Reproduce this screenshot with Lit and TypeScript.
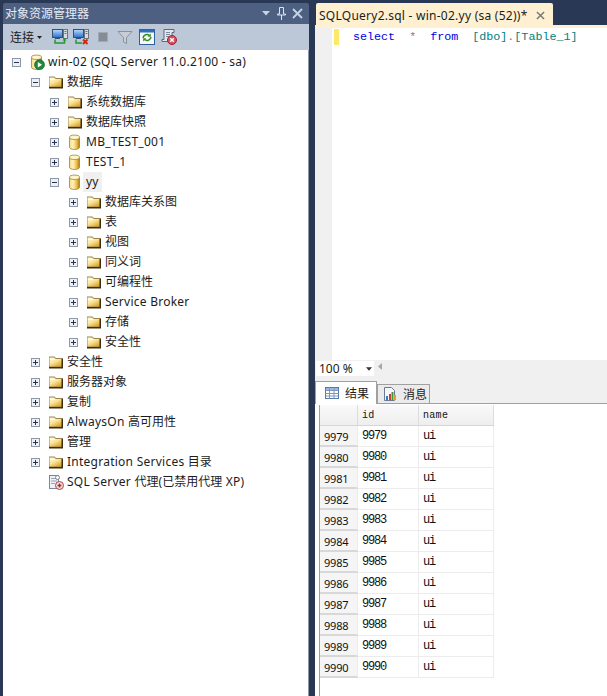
import { LitElement, html, css, svg } from "lit";
import { customElement } from "lit/decorators.js";

type Ic = "server" | "folder" | "db" | "agent";
interface Node { label: string; level: number; icon: Ic; exp?: "+" | "-"; sel?: boolean }

const nodes: Node[] = [
  { label: "win-02 (SQL Server 11.0.2100 - sa)", level: 0, icon: "server", exp: "-" },
  { label: "数据库", level: 1, icon: "folder", exp: "-" },
  { label: "系统数据库", level: 2, icon: "folder", exp: "+" },
  { label: "数据库快照", level: 2, icon: "folder", exp: "+" },
  { label: "MB_TEST_001", level: 2, icon: "db", exp: "+" },
  { label: "TEST_1", level: 2, icon: "db", exp: "+" },
  { label: "yy", level: 2, icon: "db", exp: "-", sel: true },
  { label: "数据库关系图", level: 3, icon: "folder", exp: "+" },
  { label: "表", level: 3, icon: "folder", exp: "+" },
  { label: "视图", level: 3, icon: "folder", exp: "+" },
  { label: "同义词", level: 3, icon: "folder", exp: "+" },
  { label: "可编程性", level: 3, icon: "folder", exp: "+" },
  { label: "Service Broker", level: 3, icon: "folder", exp: "+" },
  { label: "存储", level: 3, icon: "folder", exp: "+" },
  { label: "安全性", level: 3, icon: "folder", exp: "+" },
  { label: "安全性", level: 1, icon: "folder", exp: "+" },
  { label: "服务器对象", level: 1, icon: "folder", exp: "+" },
  { label: "复制", level: 1, icon: "folder", exp: "+" },
  { label: "AlwaysOn 高可用性", level: 1, icon: "folder", exp: "+" },
  { label: "管理", level: 1, icon: "folder", exp: "+" },
  { label: "Integration Services 目录", level: 1, icon: "folder", exp: "+" },
  { label: "SQL Server 代理(已禁用代理 XP)", level: 1, icon: "agent" },
];

const rows = Array.from({ length: 12 }, (_, i) => 9979 + i);

/* Latin runs get a little tracking; CJK stays on its 12px cell. */
const runs = (text: string) =>
  text.split(/([\u0020-\u007e]+)/).filter(Boolean).map((part) =>
    /^[\u0020-\u007e]/.test(part) ? html`<span class="lt">${part}</span>` : part
  );

const gradDefs = svg`
  <linearGradient id="fg" x1="0" y1="0" x2="0.7" y2="1">
    <stop offset="0" stop-color="#fffbe6"/><stop offset="0.5" stop-color="#fbe59a"/><stop offset="1" stop-color="#dca52a"/>
  </linearGradient>
  <linearGradient id="dbg" x1="0" y1="0" x2="1" y2="0">
    <stop offset="0" stop-color="#f7dc85"/><stop offset="0.35" stop-color="#fff3c0"/><stop offset="0.75" stop-color="#e8b840"/><stop offset="1" stop-color="#a87810"/>
  </linearGradient>
  <linearGradient id="scr" x1="0" y1="0" x2="0" y2="1">
    <stop offset="0" stop-color="#b8dcff"/><stop offset="1" stop-color="#2a6fd0"/>
  </linearGradient>`;

const folder = svg`<svg class="ic" viewBox="0 0 16 16" width="16" height="16">
  <path d="M1 2.500h5.500l1.500 1.500h7v10H1z" fill="#9a8450"/>
  <path d="M1.500 3.500h4.800l1.500 1.500h6.700v7.500h-13z" fill="url(#fg)"/>
  <path d="M15 5v9.500H1v-1.500h12.500V5z" fill="#3c2e10"/>
  <path d="M2 5.500h5" stroke="#fff" fill="none"/></svg>`;

const dbBody = svg`
  <path d="M2.500 3.500v9.800c0 1.200 2.300 2.200 5 2.200s5-1 5-2.200V3.500z" fill="url(#dbg)" stroke="#a08030" stroke-width=".8"/>
  <ellipse cx="7.500" cy="3.300" rx="5" ry="2.200" fill="#fff6cc" stroke="#a08030" stroke-width=".8"/>`;

const db = svg`<svg class="ic" viewBox="0 0 16 16" width="16" height="16">${dbBody}</svg>`;

const server = svg`<svg class="ic" viewBox="0 0 16 16" width="16" height="16">${dbBody}
  <circle cx="10.500" cy="10.800" r="5" fill="#1f8a3a" stroke="#0e5a20" stroke-width=".6"/>
  <path d="M8.800 8l4.200 2.800-4.200 2.800z" fill="#fff"/></svg>`;

const agent = svg`<svg class="ic" viewBox="0 0 16 16" width="16" height="16">
  <rect x="1.500" y="1.500" width="9" height="13" fill="#eef1f6" stroke="#7d8694"/>
  <path d="M3 4.500h6M3 7h6M3 9.500h4" stroke="#9aa4b4"/>
  <circle cx="9.500" cy="3.500" r="2" fill="#fff" stroke="#7d8694"/>
  <circle cx="11.500" cy="11.500" r="4" fill="#e9e4e4" stroke="#b04040"/>
  <path d="M9.500 11.500h4M11.500 9.500v4" stroke="#c02020" stroke-width="1.400"/></svg>`;

const icons: Record<Ic, unknown> = { folder, db, server, agent };

const monitor = svg`
  <rect x="0.500" y="0.500" width="10" height="8" fill="url(#scr)" stroke="#36506e"/>
  <rect x="11.500" y="0.500" width="4" height="9" fill="#d7dbe2" stroke="#6c7480"/>
  <path d="M12.500 2.500h2M12.500 4.500h2" stroke="#6c7480"/>
  <path d="M3 9.500h5" stroke="#36506e"/>`;

const connectIc = svg`<svg class="tb" viewBox="0 0 16 16" width="16" height="16">${monitor}
  <path d="M3 10.500v3.500h9.500v-3" fill="none" stroke="#1f9a30" stroke-width="1.500"/>
  <path d="M10.500 11.500l2-2.500 2 2.500z" fill="#1f9a30"/></svg>`;

const disconnectIc = svg`<svg class="tb" viewBox="0 0 16 16" width="16" height="16">${monitor}
  <path d="M3 10.500v3.500h6" fill="none" stroke="#1f9a30" stroke-width="1.500"/>
  <path d="M10 10.500l4.500 4.500M14.500 10.500L10 15" stroke="#d82010" stroke-width="1.800"/></svg>`;

const stopIc = svg`<svg class="tb wide" viewBox="0 0 16 16" width="16" height="16">
  <rect x="3.500" y="3.500" width="9" height="9" fill="#858c96" stroke="#a2a9b4"/></svg>`;

const filterIc = svg`<svg class="tb wide" viewBox="0 0 16 16" width="16" height="16">
  <path d="M1 2.500h14L9.500 8.500v6l-3-1.500V8.500z" fill="#c9ced6" stroke="#8c929c"/></svg>`;

const refreshIc = svg`<svg class="tb wide" viewBox="0 0 16 16" width="16" height="16">
  <rect x="0.500" y="0.500" width="15" height="15" fill="#f4f7fb" stroke="#2f5f9c"/>
  <rect x="1" y="1" width="14" height="2.500" fill="#2f6fc0"/>
  <path d="M4 9a4 4 0 0 1 6.500-2.500M12 8a4 4 0 0 1-6.500 2.500" fill="none" stroke="#3a8a20" stroke-width="1.600"/>
  <path d="M11.800 4.500v3.200H8.600zM4.200 12.500V9.300h3.200z" fill="#3a8a20"/></svg>`;

const scrollIc = svg`<svg class="tb" viewBox="0 0 16 16" width="16" height="16">
  <path d="M3 .5h10v3h-2v9H1v-2h2z" fill="#e4e8ee" stroke="#5d6878"/>
  <path d="M5 3.500h4M5 5.500h4M5 7.500h3" stroke="#7d8898"/>
  <circle cx="11" cy="11" r="4.500" fill="#d85060" stroke="#a02030"/>
  <path d="M9.200 9.200l3.600 3.600M12.800 9.200l-3.600 3.600" stroke="#fff" stroke-width="1.400"/></svg>`;

const gridIc = svg`<svg class="ti" viewBox="0 0 16 16" width="16" height="16">
  <rect x="1.500" y="2.500" width="13" height="11" fill="#fff" stroke="#5878a8"/>
  <rect x="2" y="3" width="12" height="2.500" fill="#9ab8e0"/>
  <path d="M1.500 5.500h13M1.500 8.500h13M1.500 11h13M5.500 2.500v11M10 2.500v11" stroke="#7c98c0" fill="none"/></svg>`;

const msgIc = svg`<svg class="ti" viewBox="0 0 16 16" width="16" height="16">
  <path d="M2.500 1.500h7l3 3v10h-10z" fill="#f4f6fa" stroke="#6c7a90"/>
  <rect x="7" y="8" width="2" height="6" fill="#d04030"/>
  <rect x="9.500" y="6" width="2" height="8" fill="#30a040"/>
  <rect x="12" y="9" width="2" height="5" fill="#e0a020"/>
  <rect x="4" y="10" width="2" height="4" fill="#3878c8"/></svg>`;

@customElement("app-root")
export class AppRoot extends LitElement {
  static styles = css`
    :host {
      display: grid;
      grid-template-columns: 306px 1fr;
      column-gap: 6px;
      width: 607px;
      height: 696px;
      padding: 3px 0 0 3px;
      box-sizing: border-box;
      overflow: hidden;
      background: #293955;
      font: 12px "Noto Sans", "Noto Sans CJK SC", sans-serif;
      color: #1c1c1c;
    }
    .defs { position: absolute; width: 0; height: 0; }
    svg { display: block; flex: none; }
    .lt { letter-spacing: .25px; }

    /* Object explorer */
    .explorer { display: flex; flex-direction: column; min-height: 0; }
    .title {
      height: 21px;
      flex: none;
      display: flex;
      align-items: center;
      padding: 0 6px 1px 2px;
      box-sizing: border-box;
      background: #4d6082;
      border-radius: 2px 2px 0 0;
      color: #e6ecf6;
      font-size: 12px;
    }
    .title .name { flex: 1; }
    .title .btns { display: flex; gap: 5px; align-items: center; }
    .bar {
      height: 26px;
      flex: none;
      display: flex;
      align-items: center;
      padding-left: 7px;
      background: #bcc7d8;
    }
    .bar .conn { width: 24px; }
    .bar .caret { margin: 0 10px 0 3px; }
    .bar .tb { margin-right: 5px; }
    .bar .tb.wide { margin-right: 6px; }
    .bar .spacer { width: 1px; }
    .tree {
      flex: 1;
      background: #fff;
      padding-top: 2px;
      border-right: 1px solid #8d97a8;
    }
    .node { display: flex; align-items: center; height: 20px; white-space: nowrap; }
    .exp { margin: 1px 8px 0 0; }
    .noexp { width: 9px; flex: none; margin-right: 8px; }
    .node .ic { margin-right: 3px; }
    .label { line-height: 20px; }
    .node.sel .ic { margin-right: 0; }
    .node.sel .label { background: #f0f0f0; padding: 0 3px; }

    /* Query side */
    .query { display: flex; flex-direction: column; min-width: 0; min-height: 0; }
    .tab {
      flex: none;
      width: 237px;
      height: 22px;
      margin-left: 1px;
      display: flex;
      align-items: center;
      justify-content: space-between;
      padding: 2px 8px 0 3px;
      box-sizing: border-box;
      background: #fff0d2;
      border-radius: 2px 2px 0 0;
      font-size: 12px;
      white-space: nowrap;
    }
    .strip { flex: none; height: 3px; background: #fff0d2; }
    .editor {
      flex: none;
      height: 332px;
      display: flex;
      background: #fff;
    }
    .margin { width: 17px; background: #f0f0f0; flex: none; }
    .change { width: 5px; height: 16px; margin: 1px 0 0 2px; background: #ffe868; flex: none; }
    .code {
      margin: 1px 0 0 14px;
      font: 11.700px/16px "Liberation Mono", "DejaVu Sans Mono", monospace;
      white-space: pre;
      color: #2b2b2b;
    }
    .kw { color: #0000e0; }
    .op { color: #808080; }
    .id { color: #008080; }

    .zoom {
      flex: none;
      height: 21px;
      display: flex;
      align-items: flex-start;
      background: #f0f0f0;
    }
    .combo {
      width: 58px;
      height: 15px;
      margin: 1px 0 0 1px;
      display: flex;
      align-items: center;
      justify-content: space-between;
      padding: 0 2px 0 3px;
      box-sizing: border-box;
      background: #fff;
    }
    .scrollarrow { margin: 3px 0 0 4px; }
    .tabs {
      flex: none;
      height: 23px;
      display: flex;
      align-items: flex-end;
      box-sizing: border-box;
      border-bottom: 1px solid #a0a0a0;
      background: #f0f0f0;
    }
    .rtab {
      display: flex;
      align-items: center;
      gap: 5px;
      box-sizing: border-box;
      border: 1px solid #a0a0a0;
      border-bottom: none;
    }
    .rtab.on { width: 62px; height: 23px; margin-bottom: -1px; background: #fff; padding-left: 8px; }
    .rtab.off { width: 53px; height: 19px; background: #ebebeb; padding-left: 4px; }
    .results { flex: 1; min-height: 0; background: #fff; padding: 1px 0 0 4px; }
    .gridwrap {
      height: 100%;
      border-left: 1px solid #a0a0a0;
    }
    .grid {
      display: grid;
      grid-template-columns: 38px 61px 75px;
      width: 174px;
      grid-auto-rows: 21px;
      font: 12px "Liberation Mono", "DejaVu Sans Mono", monospace;
      letter-spacing: -1.200px;
      color: #111;
    }
    .grid > div {
      display: flex;
      align-items: center;
      padding-left: 4px;
      box-sizing: border-box;
      border-right: 1px solid #ececec;
      border-bottom: 1px solid #ececec;
    }
    .grid .hd {
      background: linear-gradient(#fafafa, #eeeeef);
      border-right-color: #dcdcdc;
      border-bottom: 1px solid #d6d6d6;
      font-size: 10px;
      letter-spacing: .3px;
    }
    .grid .rh {
      background: #f5f5f5;
      border-bottom: 2px solid #d8d8d8;
      font: 11px "Noto Sans", sans-serif;
      letter-spacing: -.2px;
      padding-top: 1px;
    }
  `;

  render() {
    return html`
      <svg class="defs" aria-hidden="true">${gradDefs}</svg>
      <section class="explorer">
        <div class="title">
          <span class="name">对象资源管理器</span>
          <span class="btns">
            <svg viewBox="0 0 9 5" width="9" height="5"><path d="M0 0h8L4 4.500z" fill="#c9d2e0"/></svg>
            <svg viewBox="0 0 11 13" width="11" height="13"><path d="M3.500 .5h4v6.500h2v1h-8v-1h2zM5.500 8v5" fill="none" stroke="#dde4ee"/></svg>
            <svg viewBox="0 0 11 11" width="11" height="11"><path d="M1 1l9 9M10 1l-9 9" stroke="#c9d2e0" stroke-width="1.800"/></svg>
          </span>
        </div>
        <div class="bar">
          <span class="conn">连接</span>
          <svg class="caret" viewBox="0 0 5 3" width="5" height="3"><path d="M0 0h5L2.500 3z" fill="#222"/></svg>
          ${connectIc}${disconnectIc}
          <span class="spacer"></span>
          ${stopIc}${filterIc}${refreshIc}${scrollIc}
        </div>
        <div class="tree">
          ${nodes.map(
            (n) => html`<div class="node ${n.sel ? "sel" : ""}" style="padding-left:${9 + n.level * 19}px">
              ${n.exp ? this.expander(n.exp) : html`<span class="noexp"></span>`}
              ${icons[n.icon]}
              <span class="label">${runs(n.label)}</span>
            </div>`
          )}
        </div>
      </section>
      <section class="query">
        <div class="tab">
          <span class="lt">SQLQuery2.sql - win-02.yy (sa (52))*</span>
          <svg viewBox="0 0 10 10" width="9" height="9"><path d="M1 1l8 8M9 1l-8 8" stroke="#777" stroke-width="1.600"/></svg>
        </div>
        <div class="strip"></div>
        <div class="editor">
          <div class="margin"></div>
          <div class="change"></div>
          <div class="code"><span class="kw">select</span>  <span class="op">*</span>  <span class="kw">from</span>  <span class="id">[dbo]</span><span class="op">.</span><span class="id">[Table_1]</span></div>
        </div>
        <div class="zoom">
          <div class="combo"><span>100 %</span><svg viewBox="0 0 7 4" width="6" height="4"><path d="M0 0h7L3.500 4z" fill="#333"/></svg></div>
          <svg class="scrollarrow" viewBox="0 0 5 7" width="5" height="7"><path d="M4 0v7L0 3.500z" fill="#a8a8a8"/></svg>
        </div>
        <div class="tabs">
          <div class="rtab on">${gridIc}<span>结果</span></div>
          <div class="rtab off">${msgIc}<span>消息</span></div>
        </div>
        <div class="results">
          <div class="gridwrap">
            <div class="grid">
              <div class="hd"></div><div class="hd">id</div><div class="hd">name</div>
              ${rows.map(
                (r) => html`<div class="rh">${r}</div><div>${r}</div><div>ui</div>`
              )}
            </div>
          </div>
        </div>
      </section>
    `;
  }

  private expander(kind: "+" | "-") {
    return svg`<svg class="exp" viewBox="0 0 9 9" width="9" height="9">
      <rect x="0.500" y="0.500" width="8" height="8" fill="#eef0f4" stroke="#8e97a8"/>
      <path d="M2 4.500h5${kind === "+" ? "M4.500 2v5" : ""}" stroke="#27324c"/>
    </svg>`;
  }
}
